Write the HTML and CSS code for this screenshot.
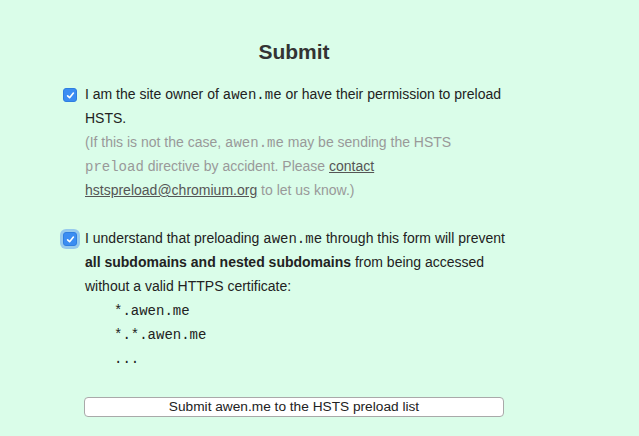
FILE: index.html
```html
<!DOCTYPE html>
<html>
<head>
<meta charset="utf-8">
<link rel="stylesheet" href="styles.css">
</head>
<body>
<main class="page">
  <h1 class="title">Submit</h1>
  <div class="item">
    <span class="check"><svg width="9" height="9" viewBox="0 0 9 9"><path d="M1.6 4.8 L3.6 6.7 L7.4 2" fill="none" stroke="#fff" stroke-width="1.6" stroke-linecap="round" stroke-linejoin="round"/></svg></span>
    <div class="text">
      I am the site owner of <code>awen.me</code> or have their permission to preload HSTS.
      <span class="note">(If this is not the case, <code>awen.me</code> may be sending the HSTS <code>preload</code> directive by accident. Please <a href="#">contact hstspreload@chromium.org</a> to let us know.)</span>
    </div>
  </div>
  <div class="item second">
    <span class="check focus"><svg width="9" height="9" viewBox="0 0 9 9"><path d="M1.6 4.8 L3.6 6.7 L7.4 2" fill="none" stroke="#fff" stroke-width="1.6" stroke-linecap="round" stroke-linejoin="round"/></svg></span>
    <div class="text">
      I understand that preloading <code>awen.me</code> through this form will prevent <b>all subdomains and nested subdomains</b> from being accessed without a valid HTTPS certificate:
      <ul class="domains">
        <li><code>*.awen.me</code></li>
        <li><code>*.*.awen.me</code></li>
        <li><code>...</code></li>
      </ul>
    </div>
  </div>
  <button class="submit">Submit awen.me to the HSTS preload list</button>
</main>
</body>
</html>
```
FILE: styles.css
```css
html, body {
  margin: 0;
  padding: 0;
  background: #dafde9;
}
body {
  font-family: "Liberation Sans", Arial, sans-serif;
  font-size: 14px;
  line-height: 24px;
  color: #222;
}
.page {
  width: 426px;
  margin-left: 84px;
  padding-top: 40px;
}
.title {
  width: 420px;
  margin: 0 0 18px;
  font-size: 21px;
  line-height: 24px;
  font-weight: bold;
  text-align: center;
  color: #333;
}
.item {
  display: flex;
  align-items: flex-start;
  margin-left: -21px;
}
.item.second {
  margin-top: 24px;
}
.check {
  flex: none;
  width: 12px;
  height: 12px;
  margin-top: 6px;
  margin-right: 8px;
  border-radius: 3px;
  background: #3b8df2;
  border: 0.5px solid #2f7ee0;
  display: flex;
  align-items: center;
  justify-content: center;
}
.check.focus {
  box-shadow: 0 0 0 3px rgba(96, 160, 240, 0.55);
}
.text {
  flex: 1;
}
code {
  font-family: "Liberation Mono", "Courier New", monospace;
  font-size: 14px;
  line-height: 1;
}
.note {
  display: block;
  color: #999;
}
.note a {
  color: #555;
  text-decoration: underline;
}
.domains {
  list-style: none;
  margin: 0;
  padding: 0 0 0 29px;
}
.submit {
  display: block;
  width: 420px;
  height: 20px;
  margin-top: 27px;
  padding: 0;
  background: #fff;
  border: 1px solid #a9a9a9;
  border-radius: 4px;
  font-family: "Liberation Sans", Arial, sans-serif;
  font-size: 13.7px;
  line-height: 18px;
  color: #222;
}
```
